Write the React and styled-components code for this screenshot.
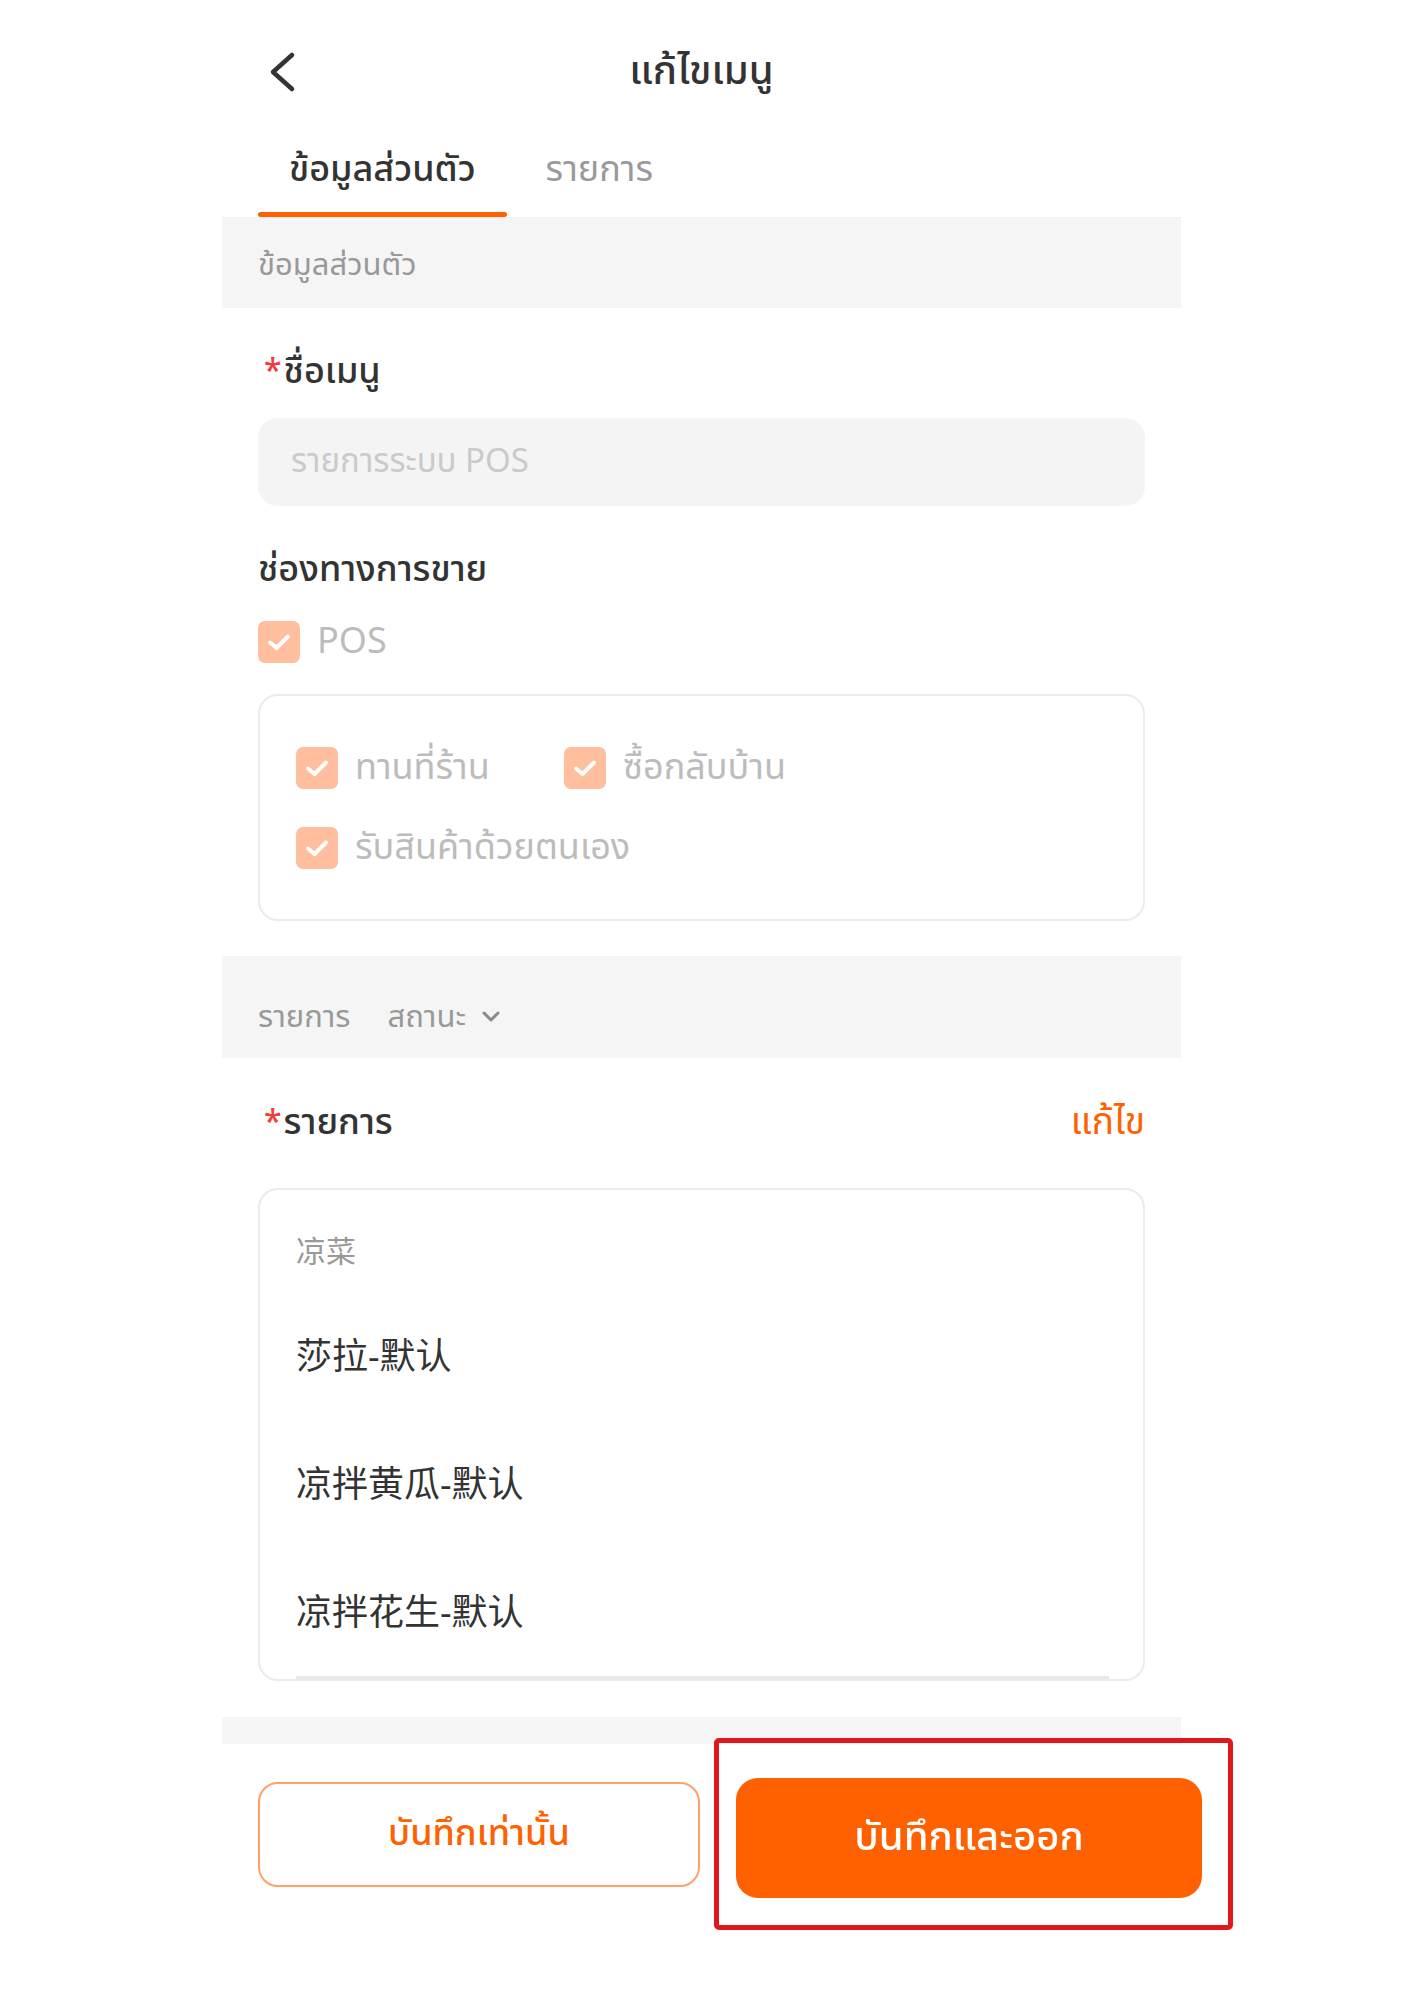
import React from "react";
import styled, { createGlobalStyle } from "styled-components";

const GlobalStyle = createGlobalStyle`
  html, body { margin: 0; padding: 0; background: #fff; }
  body {
    font-family: "Noto Sans Thai", "Noto Sans Thai UI", "Noto Sans", "Noto Sans CJK SC", sans-serif;
    color: #333;
    -webkit-font-smoothing: antialiased;
  }
  * { box-sizing: border-box; }
`;

const Page = styled.div`
  width: 959px;
  margin-left: 222px;
  padding-bottom: 60px;
`;

const Header = styled.header`
  height: 144px;
  display: grid;
  grid-template-columns: 1fr auto 1fr;
  align-items: center;
  padding: 0 36px;
`;

const BackButton = styled.button`
  width: 40px;
  height: 44px;
  padding: 0;
  border: 0;
  background: none;
  display: flex;
  cursor: pointer;
`;

const Title = styled.h1`
  margin: 0;
  font-size: 40px;
  font-weight: 500;
  color: #333;
  line-height: 1;
`;

const TabBar = styled.nav`
  display: flex;
  height: 74px;
  padding-left: 36px;
  gap: 8px;
  border-bottom: 1px solid #f0f0f0;
`;

const Tab = styled.div`
  display: flex;
  flex-direction: column;
  justify-content: space-between;
`;

const TabLabel = styled.span`
  height: 52px;
  display: flex;
  align-items: center;
  padding: 0 31px;
  font-size: 36px;
  font-weight: ${(p) => (p.$active ? 500 : 400)};
  color: ${(p) => (p.$active ? "#333" : "#9a9a9a")};
`;

const TabLine = styled.span`
  height: 5px;
  border-radius: 3px;
  background: ${(p) => (p.$active ? "#ff6000" : "transparent")};
`;

const Band = styled.div`
  height: ${(p) => p.$h}px;
  margin-top: ${(p) => p.$mt || 0}px;
  background: #f5f5f5;
  display: flex;
  align-items: center;
  gap: 37px;
  padding: ${(p) => p.$pt || 0}px 36px 0;
  font-size: 31px;
  color: #999;
`;

const BandFilter = styled.span`
  display: inline-flex;
  align-items: center;
  gap: 16px;
`;

const Section = styled.section`
  padding: 0 36px;
`;

const LabelRow = styled.div`
  height: 56px;
  margin-top: ${(p) => p.$mt}px;
  display: flex;
  align-items: center;
  justify-content: space-between;
`;

const Label = styled.span`
  display: inline-flex;
  align-items: center;
  font-size: 36px;
  font-weight: 500;
  color: #333;
`;

const Star = styled.span`
  color: #f23c3c;
  font-size: 32px;
  margin: 0 2px 0 6px;
  line-height: 1;
`;

const EditLink = styled.a`
  font-size: 37px;
  color: #ff6000;
  text-decoration: none;
  cursor: pointer;
`;

const TextInput = styled.input`
  display: block;
  width: 100%;
  height: 88px;
  margin-top: 18px;
  border: 0;
  border-radius: 20px;
  background: #f4f4f4;
  padding: 0 33px;
  font-family: inherit;
  font-size: 33px;
  color: #333;
  outline: none;
  &::placeholder { color: #cacaca; }
`;

const CheckRow = styled.label`
  display: flex;
  align-items: center;
  gap: 17px;
  height: 43px;
  margin-top: ${(p) => p.$mt || 0}px;
  grid-column: ${(p) => (p.$span ? "1 / -1" : "auto")};
  font-size: 36px;
  color: #bcbcbc;
`;

const CheckBox = styled.span`
  flex: none;
  width: 42px;
  height: 42px;
  border-radius: 7px;
  background: #ffbe9e;
  display: flex;
  align-items: center;
  justify-content: center;
`;

const ChannelBox = styled.div`
  margin-top: 31px;
  border: 2px solid #ebebeb;
  border-radius: 20px;
  padding: 50px 36px 50px;
  display: grid;
  grid-template-columns: 268px 1fr;
  row-gap: 37px;
`;

const ListBox = styled.div`
  margin-top: 37px;
  border: 2px solid #ebebeb;
  border-radius: 20px;
  overflow: hidden;
  padding-top: 20px;
`;

const Category = styled.div`
  height: 82px;
  padding-left: 36px;
  display: flex;
  align-items: center;
  font-size: 30px;
  color: #999;
`;

const Item = styled.div`
  height: 128px;
  padding-left: 36px;
  display: flex;
  align-items: center;
  font-size: 36px;
  color: #333;
`;

const ListEnd = styled.div`
  height: 3px;
  margin: 0 34px 0 36px;
  background: #e8e8e8;
`;

const ButtonRow = styled.div`
  margin-top: -6px;
  padding-left: 36px;
  display: flex;
  align-items: center;
  gap: 14px;
`;

const GhostButton = styled.button`
  flex: none;
  width: 442px;
  height: 105px;
  border: 2px solid #ffa06a;
  border-radius: 20px;
  background: #fff;
  color: #ff6000;
  font-family: inherit;
  font-size: 36px;
  font-weight: 500;
  cursor: pointer;
`;

const Highlight = styled.div`
  flex: none;
  width: 519px;
  height: 192px;
  border: 5px solid #e2171b;
  border-radius: 5px;
  padding: 35px 26px 27px 17px;
  display: flex;
`;

const PrimaryButton = styled.button`
  flex: 1;
  height: 120px;
  border: 0;
  border-radius: 22px;
  background: #ff6000;
  color: #fff;
  font-family: inherit;
  font-size: 40px;
  font-weight: 500;
  filter: blur(0.6px);
  cursor: pointer;
`;

const Check = () => (
  <svg width="24" height="18" viewBox="0 0 24 18" fill="none">
    <path d="M3 9.5 L9.5 15 L21 3.5" stroke="#fff" strokeWidth="4" strokeLinecap="round" strokeLinejoin="round" />
  </svg>
);

const Option = ({ children, ...rest }) => (
  <CheckRow {...rest}>
    <CheckBox>
      <Check />
    </CheckBox>
    {children}
  </CheckRow>
);

export default function App() {
  return (
    <>
      <GlobalStyle />
      <Page>
        <Header>
          <BackButton aria-label="back">
            <svg width="40" height="44" viewBox="0 0 40 44" fill="none">
              <path d="M34 5 L15 22 L34 39" stroke="#333" strokeWidth="4.5" strokeLinecap="round" strokeLinejoin="round" />
            </svg>
          </BackButton>
          <Title>แก้ไขเมนู</Title>
          <span />
        </Header>

        <TabBar>
          <Tab>
            <TabLabel $active>ข้อมูลส่วนตัว</TabLabel>
            <TabLine $active />
          </Tab>
          <Tab>
            <TabLabel>รายการ</TabLabel>
            <TabLine />
          </Tab>
        </TabBar>

        <Band $h={90} $pt={4}>ข้อมูลส่วนตัว</Band>

        <Section>
          <LabelRow $mt={36}>
            <Label>
              <Star>*</Star>ชื่อเมนู
            </Label>
          </LabelRow>
          <TextInput placeholder="รายการระบบ POS" />

          <LabelRow $mt={36}>
            <Label>ช่องทางการขาย</Label>
          </LabelRow>
          <Option $mt={22}>POS</Option>

          <ChannelBox>
            <Option>ทานที่ร้าน</Option>
            <Option>ซื้อกลับบ้าน</Option>
            <Option $span>รับสินค้าด้วยตนเอง</Option>
          </ChannelBox>
        </Section>

        <Band $h={102} $pt={20} $mt={35}>
          <span>รายการ</span>
          <BandFilter>
            สถานะ
            <svg width="18" height="12" viewBox="0 0 18 12" fill="none">
              <path d="M2 2 L9 9 L16 2" stroke="#8a8a8a" strokeWidth="3" strokeLinecap="round" strokeLinejoin="round" />
            </svg>
          </BandFilter>
        </Band>

        <Section>
          <LabelRow $mt={37}>
            <Label>
              <Star>*</Star>รายการ
            </Label>
            <EditLink>แก้ไข</EditLink>
          </LabelRow>
          <ListBox>
            <Category>凉菜</Category>
            <Item>莎拉-默认</Item>
            <Item>凉拌黄瓜-默认</Item>
            <Item>凉拌花生-默认</Item>
            <ListEnd />
          </ListBox>
        </Section>

        <Band $h={27} $mt={36} />

        <ButtonRow>
          <GhostButton>บันทึกเท่านั้น</GhostButton>
          <Highlight>
            <PrimaryButton>บันทึกและออก</PrimaryButton>
          </Highlight>
        </ButtonRow>
      </Page>
    </>
  );
}
